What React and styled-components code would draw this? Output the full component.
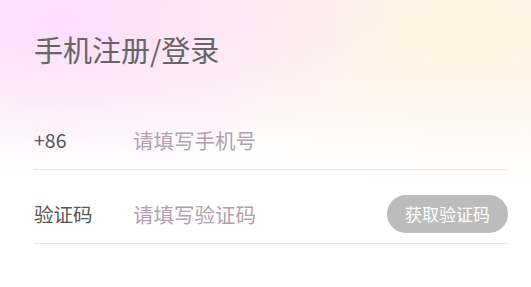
import React from "react";
import styled, { createGlobalStyle } from "styled-components";

const GlobalStyle = createGlobalStyle`
  html, body {
    margin: 0;
    padding: 0;
    background: #fff;
  }
  body {
    font-family: "Noto Sans CJK SC", "Noto Sans", sans-serif;
  }
`;

const Page = styled.div`
  width: 531px;
  height: 287px;
  box-sizing: border-box;
  padding: 26px 23px 0 34px;
  background:
    radial-gradient(ellipse 340px 150px at 60px 20px, rgba(251, 218, 250, 0.9), rgba(251, 218, 250, 0) 100%),
    radial-gradient(ellipse 380px 150px at 470px 30px, rgba(255, 244, 224, 0.95), rgba(255, 244, 224, 0) 100%),
    linear-gradient(180deg, #fdf1f6 0%, #fff 62%);
`;

const Title = styled.h1`
  margin: 0;
  font-size: 29px;
  font-weight: 400;
  line-height: 46px;
  color: #666;
`;

const Form = styled.div`
  margin-top: 24px;
  display: flex;
  flex-direction: column;
`;

const Row = styled.div`
  display: flex;
  align-items: center;
  box-sizing: border-box;
  height: ${(p) => p.$h}px;
  padding-top: 14px;
  border-bottom: 1px solid #e6e6e6;
`;

const Label = styled.span`
  width: 99px;
  flex: none;
  font-size: 19.5px;
  color: #555;
`;

const Field = styled.input`
  flex: 1;
  min-width: 0;
  border: none;
  outline: none;
  background: transparent;
  padding: 0;
  font-family: "Noto Sans CJK SC", sans-serif;
  font-size: 20.5px;
  color: #333;
  &::placeholder {
    color: #b49fae;
  }
`;

const CodeButton = styled.button`
  flex: none;
  width: 121px;
  height: 38px;
  border: none;
  border-radius: 19px;
  background: #bcbcbc;
  color: #fff;
  font-family: "Noto Sans CJK SC", sans-serif;
  font-size: 17px;
  padding: 0;
`;

export default function App() {
  return (
    <>
      <GlobalStyle />
      <Page>
        <Title>手机注册/登录</Title>
        <Form>
          <Row $h={74}>
            <Label>+86</Label>
            <Field placeholder="请填写手机号" />
          </Row>
          <Row $h={74}>
            <Label>验证码</Label>
            <Field placeholder="请填写验证码" />
            <CodeButton>获取验证码</CodeButton>
          </Row>
        </Form>
      </Page>
    </>
  );
}
